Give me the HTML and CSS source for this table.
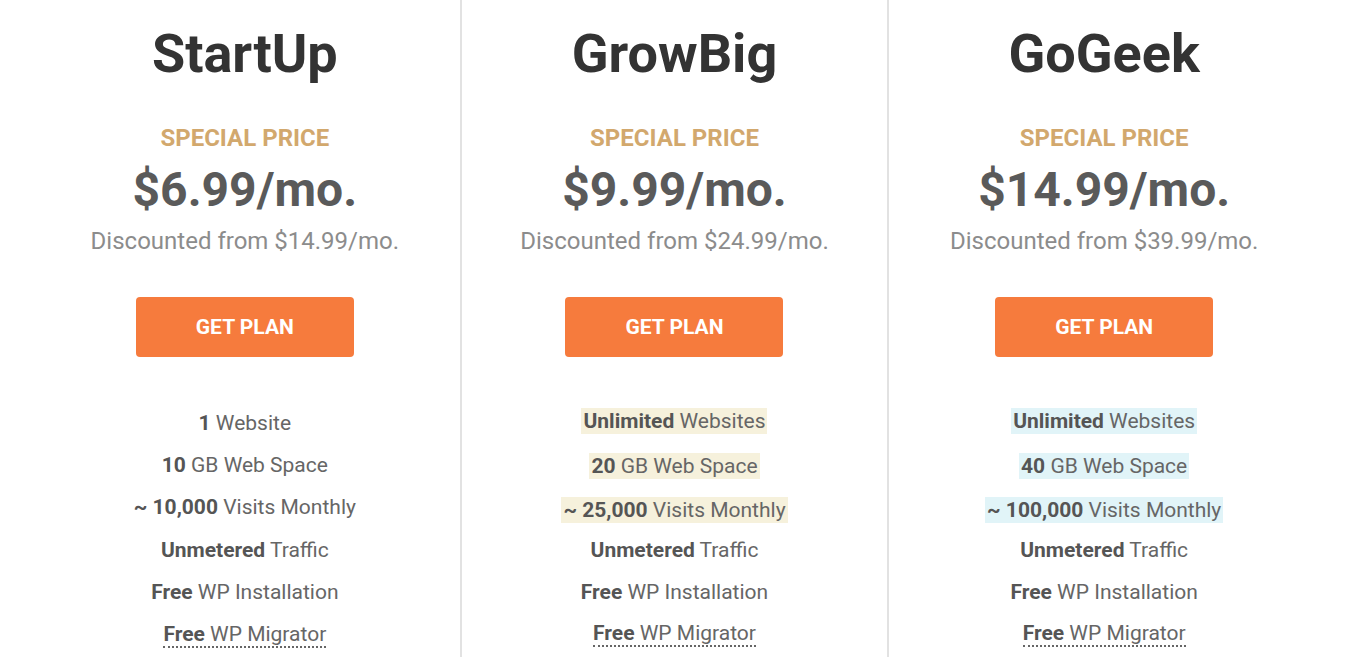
FILE: index.html
```html
<!DOCTYPE html>
<html lang="en">
<head>
<meta charset="utf-8">
<title>Plans</title>
<link rel="stylesheet" href="styles.css">
</head>
<body>
<div class="plans">
  <section class="plan">
    <h2 class="plan-name">StartUp</h2>
    <div class="special">SPECIAL PRICE</div>
    <div class="price">$6.99/mo.</div>
    <div class="discount">Discounted from $14.99/mo.</div>
    <a class="btn" href="#">GET PLAN</a>
    <ul class="features">
      <li class="feature"><span><b>1</b> Website</span></li>
      <li class="feature"><span><b>10</b> GB Web Space</span></li>
      <li class="feature"><span><b>~ 10,000</b> Visits Monthly</span></li>
      <li class="feature"><span><b>Unmetered</b> Traffic</span></li>
      <li class="feature"><span><b>Free</b> WP Installation</span></li>
      <li class="feature"><span class="dotted"><b>Free</b> WP Migrator</span></li>
    </ul>
  </section>
  <section class="plan plan-mid">
    <h2 class="plan-name">GrowBig</h2>
    <div class="special">SPECIAL PRICE</div>
    <div class="price">$9.99/mo.</div>
    <div class="discount">Discounted from $24.99/mo.</div>
    <a class="btn" href="#">GET PLAN</a>
    <ul class="features features-hl">
      <li class="feature hl"><span class="mark mark-cream"><b>Unlimited</b> Websites</span></li>
      <li class="feature hl"><span class="mark mark-cream"><b>20</b> GB Web Space</span></li>
      <li class="feature hl"><span class="mark mark-cream"><b>~ 25,000</b> Visits Monthly</span></li>
      <li class="feature"><span><b>Unmetered</b> Traffic</span></li>
      <li class="feature"><span><b>Free</b> WP Installation</span></li>
      <li class="feature"><span class="dotted"><b>Free</b> WP Migrator</span></li>
    </ul>
  </section>
  <section class="plan">
    <h2 class="plan-name">GoGeek</h2>
    <div class="special">SPECIAL PRICE</div>
    <div class="price">$14.99/mo.</div>
    <div class="discount">Discounted from $39.99/mo.</div>
    <a class="btn" href="#">GET PLAN</a>
    <ul class="features features-hl">
      <li class="feature hl"><span class="mark mark-blue"><b>Unlimited</b> Websites</span></li>
      <li class="feature hl"><span class="mark mark-blue"><b>40</b> GB Web Space</span></li>
      <li class="feature hl"><span class="mark mark-blue"><b>~ 100,000</b> Visits Monthly</span></li>
      <li class="feature"><span><b>Unmetered</b> Traffic</span></li>
      <li class="feature"><span><b>Free</b> WP Installation</span></li>
      <li class="feature"><span class="dotted"><b>Free</b> WP Migrator</span></li>
    </ul>
  </section>
</div>
</body>
</html>
```

FILE: styles.css
```css
* { box-sizing: border-box; }
html, body {
  margin: 0;
  padding: 0;
  background: #ffffff;
  overflow: hidden;
}
body {
  font-family: Roboto, "Liberation Sans", Arial, sans-serif;
  color: #666666;
}
.plans {
  display: grid;
  grid-template-columns: 1fr 1fr 1fr;
  padding: 0 30px;
  height: 100vh;
}
.plan {
  display: flex;
  flex-direction: column;
  align-items: center;
  padding-top: 26px;
  text-align: center;
}
.plan-mid {
  border-left: 2px solid #e2e2e2;
  border-right: 2px solid #e2e2e2;
}
.plan-name {
  margin: 0;
  font-size: 54px;
  line-height: 56px;
  font-weight: 700;
  color: #333333;
}
.special {
  margin-top: 41px;
  font-size: 24px;
  line-height: 30px;
  font-weight: 700;
  color: #d2a86d;
}
.price {
  margin-top: 12px;
  font-size: 48px;
  line-height: 50px;
  font-weight: 700;
  color: #5a5a5a;
}
.discount {
  margin-top: 11px;
  font-size: 24px;
  line-height: 30px;
  color: #8c8c8c;
}
.btn {
  margin-top: 41px;
  width: 218px;
  height: 60px;
  display: flex;
  align-items: center;
  justify-content: center;
  background: #f67b3d;
  border-radius: 4px;
  color: #ffffff;
  font-size: 21px;
  font-weight: 700;
  text-decoration: none;
}
.features {
  list-style: none;
  margin: 45px 0 0;
  padding: 0;
  width: 100%;
}
.features-hl {
  margin-top: 42px;
}
.feature {
  height: 42.2px;
  display: flex;
  align-items: center;
  justify-content: center;
  font-size: 21px;
  color: #666666;
}
.feature.hl {
  height: 44.5px;
}
.feature.hl + .feature:not(.hl) {
  margin-top: -4px;
}
.feature b {
  font-weight: 700;
  color: #555555;
}
.mark {
  padding: 1px 2px;
}
.mark-cream { background: #f6f1dc; }
.mark-blue { background: #e1f4f8; }
.dotted {
  border-bottom: 2px dotted #666666;
  line-height: 24px;
  padding-top: 1px;
}
```
